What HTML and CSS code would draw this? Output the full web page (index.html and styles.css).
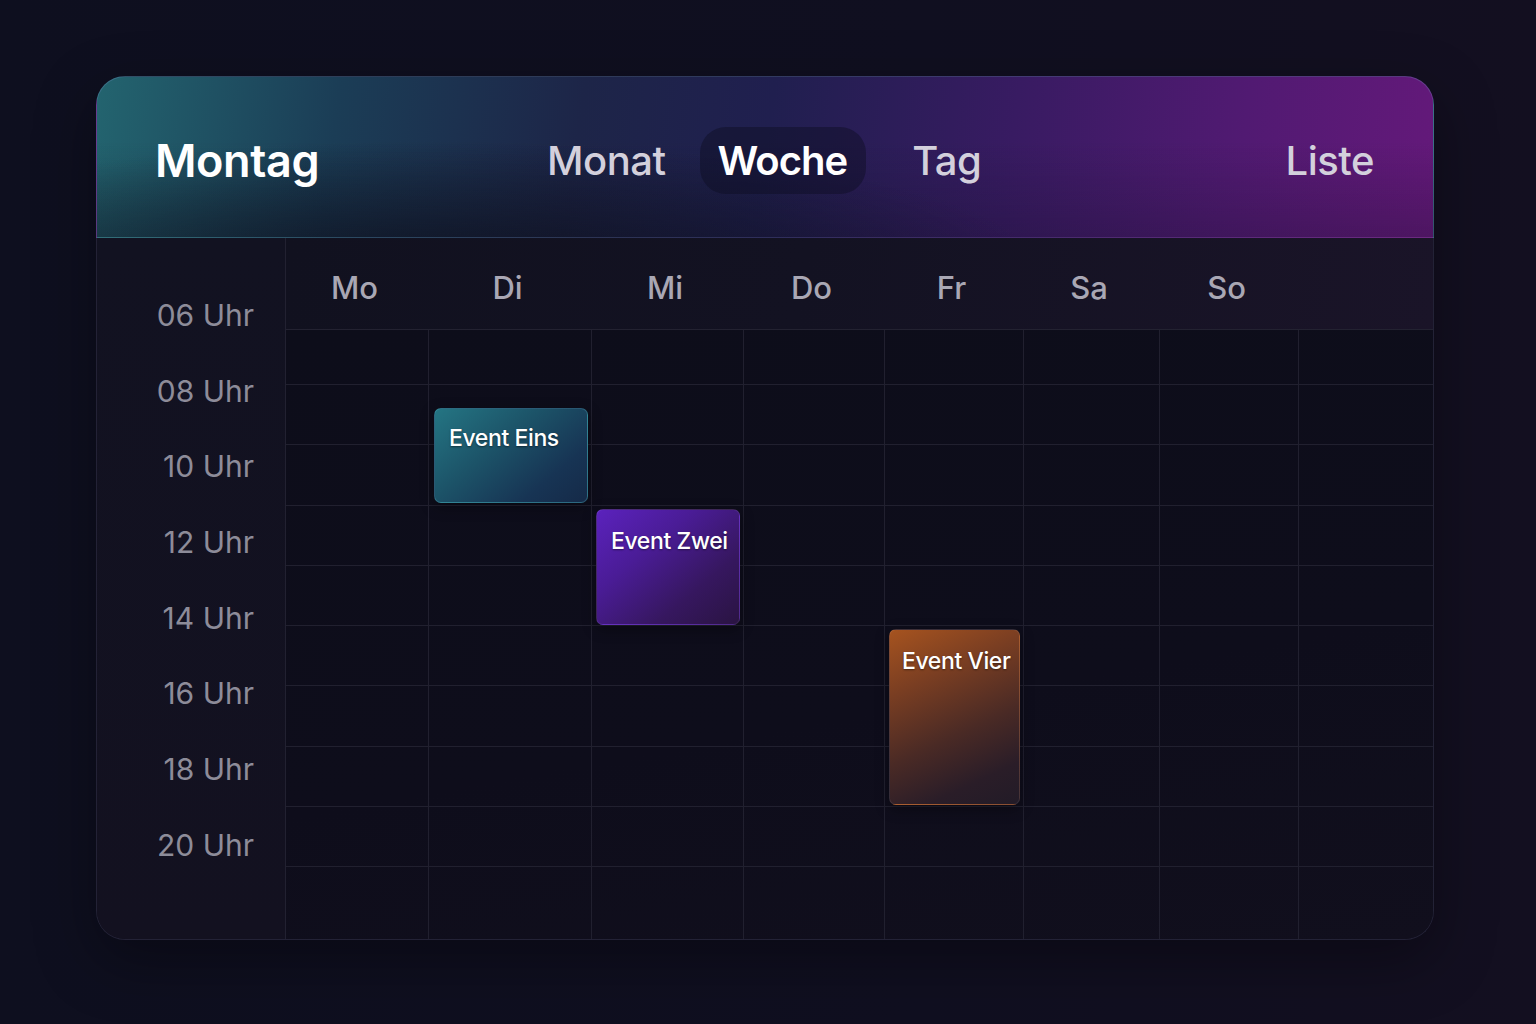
FILE: index.html
```html
<!DOCTYPE html>
<html lang="de">
<head>
<meta charset="utf-8">
<title>Kalender – Woche</title>
<link rel="stylesheet" href="styles.css">
</head>
<body>
<div class="card">
  <header class="card-header">
    <div class="title">Montag</div>
    <nav class="tabs">
      <span class="tab">Monat</span>
      <span class="tab active">Woche</span>
      <span class="tab tab-spaced">Tag</span>
    </nav>
    <span class="tab tab-list">Liste</span>
  </header>
  <div class="card-body">
    <div class="times">
      <div class="time">06 Uhr</div>
      <div class="time">08 Uhr</div>
      <div class="time">10 Uhr</div>
      <div class="time">12 Uhr</div>
      <div class="time">14 Uhr</div>
      <div class="time">16 Uhr</div>
      <div class="time">18 Uhr</div>
      <div class="time">20 Uhr</div>
    </div>
    <div class="main">
      <div class="days">
        <div class="day">Mo</div>
        <div class="day">Di</div>
        <div class="day">Mi</div>
        <div class="day">Do</div>
        <div class="day">Fr</div>
        <div class="day">Sa</div>
        <div class="day">So</div>
        <div class="day"></div>
      </div>
      <div class="grid-wrap">
        <div class="grid">
          <div></div><div></div><div></div><div></div><div></div><div></div><div></div><div></div>
          <div></div><div></div><div></div><div></div><div></div><div></div><div></div><div></div>
          <div></div><div></div><div></div><div></div><div></div><div></div><div></div><div></div>
          <div></div><div></div><div></div><div></div><div></div><div></div><div></div><div></div>
          <div></div><div></div><div></div><div></div><div></div><div></div><div></div><div></div>
          <div></div><div></div><div></div><div></div><div></div><div></div><div></div><div></div>
          <div></div><div></div><div></div><div></div><div></div><div></div><div></div><div></div>
          <div></div><div></div><div></div><div></div><div></div><div></div><div></div><div></div>
          <div></div><div></div><div></div><div></div><div></div><div></div><div></div><div></div>
          <div></div><div></div><div></div><div></div><div></div><div></div><div></div><div></div>
        </div>
        <div class="event event-eins">Event Eins</div>
        <div class="event event-zwei">Event Zwei</div>
        <div class="event event-vier">Event Vier</div>
      </div>
    </div>
  </div>
</div>
</body>
</html>
```

FILE: styles.css
```css
* { box-sizing: border-box; }

html, body { height: 100%; }

body {
  margin: 0;
  padding: 76px 0 0 96px;
  background: linear-gradient(90deg, #0e0f1f 0%, #100f20 60%, #130f20 100%);
  font-family: Inter, "Noto Sans", "Liberation Sans", sans-serif;
  color: #fff;
}

.card {
  width: 1338px;
  height: 864px;
  display: flex;
  flex-direction: column;
  border-radius: 29px;
  box-shadow: 0 20px 60px rgba(0, 0, 0, 0.35);
}

/* ---------- header ---------- */
.card-header {
  height: 162px;
  flex: 0 0 162px;
  display: flex;
  align-items: center;
  padding: 6px 59px 0 58px;
  border: 1px solid rgba(120, 150, 200, 0.28);
  border-bottom-color: rgba(255, 255, 255, 0.07);
  border-radius: 29px 29px 0 0;
  background:
    radial-gradient(ellipse 45% 75% at 25% 115%, rgba(14, 16, 30, 0.75) 0%, rgba(14, 16, 30, 0) 100%),
    linear-gradient(180deg, rgba(0, 0, 0, 0) 40%, rgba(10, 10, 25, 0.25) 100%),
    linear-gradient(98deg, #23646f 0%, #1b3d56 18%, #1d2548 36%, #201f4f 50%, #381b62 68%, #511a72 85%, #64197a 100%);
}

.title {
  flex: 0 0 auto;
  width: 372px;
  font-size: 45px;
  font-weight: 600;
  letter-spacing: -0.4px;
  color: #ffffff;
}

.tabs {
  display: flex;
  align-items: center;
  gap: 14px;
}

.tab {
  display: flex;
  align-items: center;
  height: 67px;
  padding: 0 20px;
  border-radius: 26px;
  font-size: 40px;
  font-weight: 500;
  letter-spacing: -0.5px;
  color: #d3d0dc;
}

.tab.active {
  color: #ffffff;
  font-weight: 600;
  letter-spacing: -1px;
  padding: 0 19px 0 18px;
  background: rgba(14, 13, 34, 0.45);
}

.tab-spaced { margin-left: 12px; }

.tab-list {
  margin-left: auto;
  padding-right: 0;
}

/* ---------- body ---------- */
.card-body {
  flex: 1 1 auto;
  display: flex;
  border: 1px solid #232236;
  border-top: 0;
  border-radius: 0 0 29px 29px;
  overflow: hidden;
  background: #0e0d1a;
}

.times {
  flex: 0 0 189px;
  border-right: 1px solid #222131;
  padding: 40px 31px 0 0;
  display: flex;
  flex-direction: column;
  align-items: flex-end;
  background: linear-gradient(180deg, #121221 0%, #131120 100%);
}

.time {
  height: 75.7px;
  line-height: 75.7px;
  font-size: 30px;
  font-weight: 400;
  color: #8d8c99;
}

.main {
  flex: 1 1 auto;
  display: flex;
  flex-direction: column;
}

.days,
.grid {
  display: grid;
  grid-template-columns: 143px 163px 152px 141px 139px 136px 139px 1fr;
}

.days {
  height: 92px;
  flex: 0 0 92px;
  border-bottom: 1px solid #232231;
  align-items: center;
  padding-top: 8px;
  background: linear-gradient(100deg, #11111f 0%, #131222 45%, #1a1428 100%);
}

.day {
  text-align: center;
  padding-right: 6px;
  font-size: 31px;
  font-weight: 500;
  color: #a9a7b4;
}

.grid-wrap {
  position: relative;
  flex: 1 1 auto;
  background: linear-gradient(170deg, #0d0d1a 0%, #0e0d1b 60%, #110f1d 100%);
}

.grid {
  height: 100%;
  grid-template-rows: 55px 60px 61px 60px 60px 60px 61px 60px 60px 1fr;
}

.grid > div {
  border-right: 1px solid #21202f;
  border-bottom: 1px solid #21202f;
}

.grid > div:nth-child(8n) { border-right: 0; }
.grid > div:nth-last-child(-n+8) { border-bottom: 0; }

/* ---------- events ---------- */
.event {
  position: absolute;
  padding: 17px 0 0 14px;
  border-radius: 7px;
  font-size: 23px;
  font-weight: 500;
  letter-spacing: -0.4px;
  white-space: nowrap;
  color: #ffffff;
  text-shadow: 0 1px 2px rgba(0, 0, 0, 0.45);
  box-shadow: 0 4px 14px rgba(0, 0, 0, 0.35);
  border: 1px solid rgba(255, 255, 255, 0.08);
}

.event-eins {
  left: 148px; top: 78px; width: 154px; height: 95px;
  padding-top: 15px;
  background: linear-gradient(140deg, #247583 0%, #1c5368 40%, #173454 75%, #152a48 100%);
  border-color: rgba(80, 170, 190, 0.35);
}

.event-zwei {
  left: 310px; top: 179px; width: 144px; height: 116px;
  background: linear-gradient(140deg, #5b22bd 0%, #4a1c96 35%, #36175f 70%, #2a1442 100%);
}

.event-vier {
  left: 603px; top: 299px; width: 131px; height: 176px;
  padding-left: 12px;
  background: linear-gradient(155deg, #a6531f 0%, #7a3e22 28%, #4a2a25 58%, #2a1d28 82%, #221b27 100%);
}
```
